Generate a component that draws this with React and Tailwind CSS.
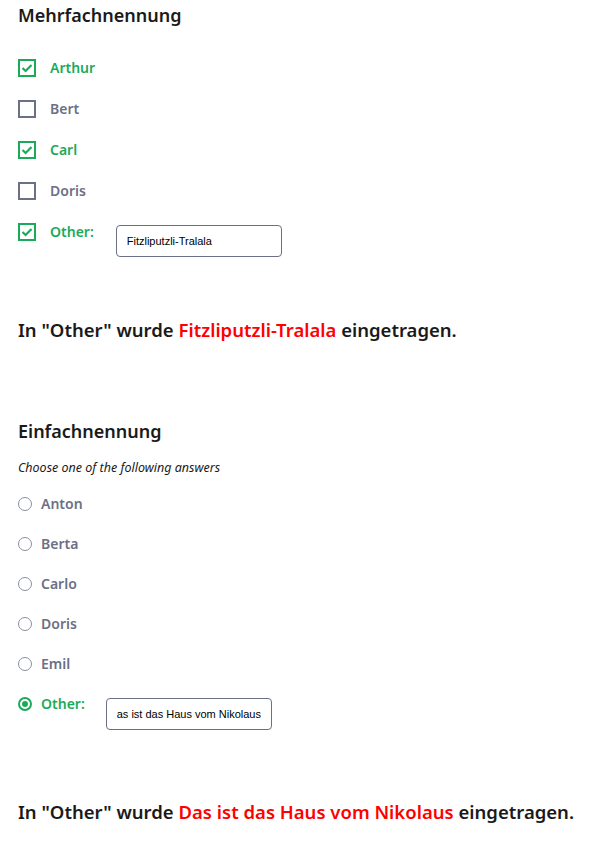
import { useState, useRef, useEffect } from 'react';

const font = { fontFamily: '"Noto Sans", "Open Sans", sans-serif' };
const inputFont = { fontFamily: '"Liberation Sans", Arial, sans-serif' };

function CheckRow({ label, checked, children }) {
  return (
    <div className="flex items-start h-[41px]">
      <div
        className={`mt-[1px] w-[18px] h-[18px] border-2 flex items-center justify-center ${
          checked ? 'border-[#1aab5a]' : 'border-[#6b7085]'
        }`}
      >
        {checked && (
          <svg width="12" height="12" viewBox="0 0 12 12" fill="none">
            <path d="M1.5 6 L4.6 9 L10.5 3" stroke="#1aab5a" strokeWidth="2.2" />
          </svg>
        )}
      </div>
      <span
        className={`ml-[14px] text-[14px] font-semibold leading-[20px] ${
          checked ? 'text-[#1aab5a]' : 'text-[#6b7085]'
        }`}
      >
        {label}
      </span>
      {children}
    </div>
  );
}

function RadioRow({ label, checked, children }) {
  return (
    <div className="flex items-start h-[40px]">
      <div
        className={`mt-[3px] w-[14px] h-[14px] rounded-full border flex items-center justify-center ${
          checked ? 'border-[#1aab5a] border-2' : 'border-[#8a8ea0]'
        }`}
      >
        {checked && <div className="w-[6px] h-[6px] rounded-full bg-[#1aab5a]" />}
      </div>
      <span
        className={`ml-[9px] text-[14px] font-semibold leading-[20px] ${
          checked ? 'text-[#1aab5a]' : 'text-[#6b7085]'
        }`}
      >
        {label}
      </span>
      {children}
    </div>
  );
}

export default function App() {
  const [other1, setOther1] = useState('Fitzliputzli-Tralala');
  const [other2, setOther2] = useState('Das ist das Haus vom Nikolaus');
  const inputRef = useRef(null);

  useEffect(() => {
    // Eingabe ans Ende scrollen, wie im Original
    if (inputRef.current) inputRef.current.scrollLeft = inputRef.current.scrollWidth;
  }, []);

  return (
    <div className="bg-white min-h-screen px-[18px] pt-[1px] pb-[20px] text-[#1a1a1a]" style={font}>
      <h2 className="text-[18px] font-semibold leading-[28px]">Mehrfachnennung</h2>

      <div className="mt-[29px]">
        <CheckRow label="Arthur" checked />
        <CheckRow label="Bert" />
        <CheckRow label="Carl" checked />
        <CheckRow label="Doris" />
        <CheckRow label="Other:" checked>
          <input
            className="ml-[22px] mt-[3px] w-[166px] h-[32px] border border-[#6b7085] rounded-[4px] px-[10px] text-[11px] text-black outline-none"
            style={inputFont}
            value={other1}
            onChange={(e) => setOther1(e.target.value)}
          />
        </CheckRow>
      </div>

      <p className="mt-[55px] text-[18.5px] font-semibold leading-[24px]">
        In "Other" wurde <span className="text-[#ff0000]">{other1}</span> eingetragen.
      </p>

      <h2 className="mt-[75px] text-[18px] font-semibold leading-[28px]">Einfachnennung</h2>
      <p className="mt-[15px] text-[12.5px] italic leading-[16px]">Choose one of the following answers</p>

      <div className="mt-[18px]">
        <RadioRow label="Anton" />
        <RadioRow label="Berta" />
        <RadioRow label="Carlo" />
        <RadioRow label="Doris" />
        <RadioRow label="Emil" />
        <RadioRow label="Other:" checked>
          <input
            ref={inputRef}
            className="ml-[21px] mt-[4px] w-[166px] h-[32px] border border-[#6b7085] rounded-[4px] px-[10px] text-[11px] text-black outline-none"
            style={inputFont}
            value={other2}
            onChange={(e) => setOther2(e.target.value)}
          />
        </RadioRow>
      </div>

      <p className="mt-[66px] text-[18.5px] font-semibold leading-[24px]">
        In "Other" wurde <span className="text-[#ff0000]">{other2}</span> eingetragen.
      </p>
    </div>
  );
}
